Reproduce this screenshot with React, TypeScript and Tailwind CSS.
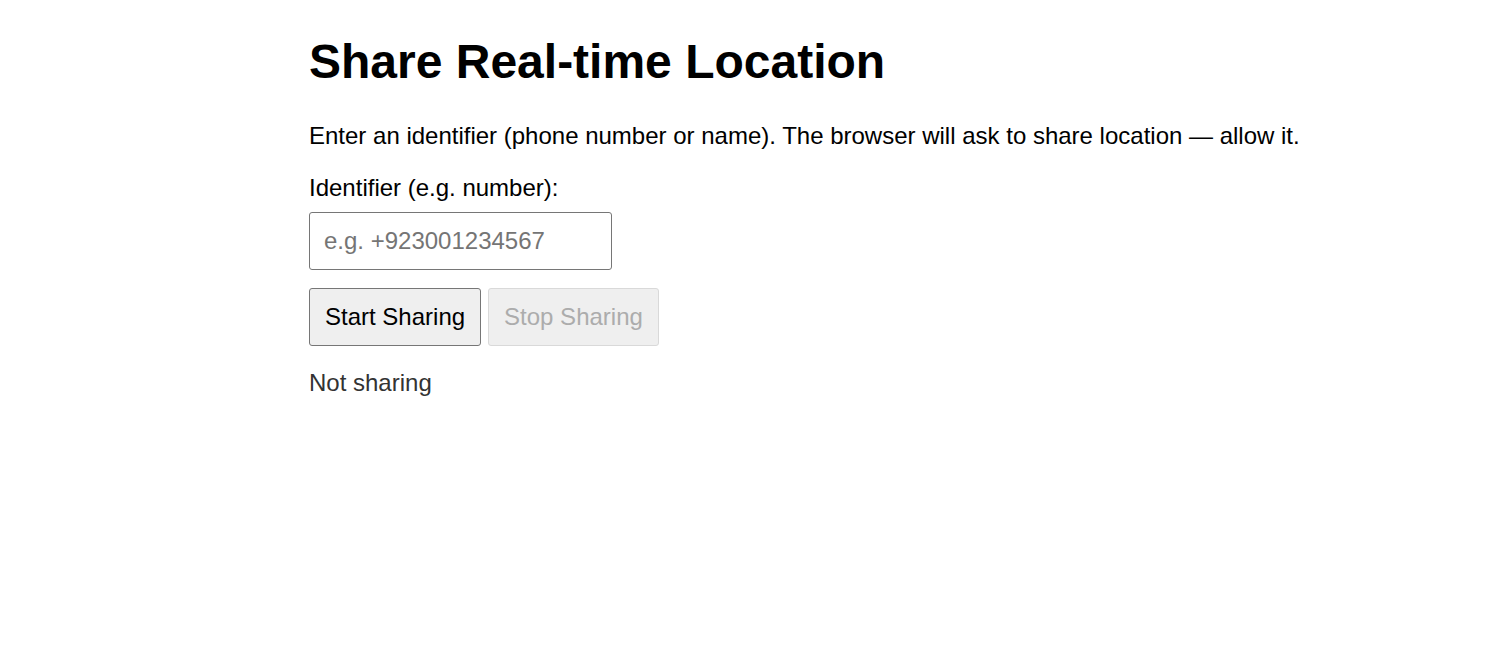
import React from "react";

export default function App() {
  return (
    <div className="min-h-[670px] bg-white text-black" style={{ fontFamily: '"Liberation Sans", Arial, sans-serif' }}>
      <div className="ml-[309px] pt-[34px]">
        <h1 className="text-[48px] font-bold leading-[56px] m-0">Share Real-time Location</h1>
        <p className="mt-[32px] text-[24px] leading-[28px] whitespace-nowrap">
          Enter an identifier (phone number or name). The browser will ask to share location — allow it.
        </p>
        <label className="block mt-[24px] text-[24px] leading-[28px]">Identifier (e.g. number):</label>
        <input
          placeholder="e.g. +923001234567"
          className="block mt-[10px] w-[303px] h-[58px] px-[14px] border border-[#767676] rounded-[3px] text-[24px] placeholder:text-[#757575] outline-none"
        />
        <div className="flex gap-[7px] mt-[18px]">
          <button className="h-[58px] px-[15px] bg-[#efefef] border border-[#767676] rounded-[3px] text-[24px] text-black">
            Start Sharing
          </button>
          <button disabled className="h-[58px] px-[15px] bg-[#efefef] border border-[#d9d9d9] rounded-[3px] text-[24px] text-[#acacac]">
            Stop Sharing
          </button>
        </div>
        <p className="mt-[23px] text-[24px] leading-[28px] text-[#333]">Not sharing</p>
      </div>
    </div>
  );
}
